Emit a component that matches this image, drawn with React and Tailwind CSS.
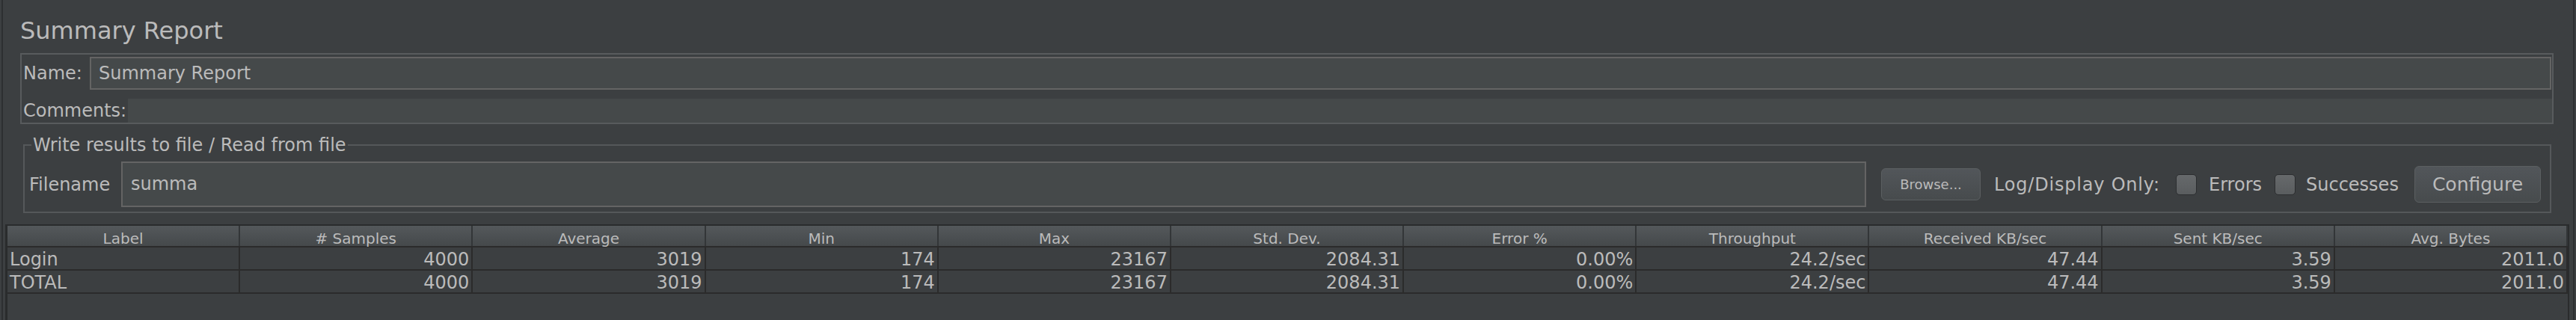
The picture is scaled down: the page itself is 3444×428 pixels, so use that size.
import React from 'react';

const headers = ['Label', '# Samples', 'Average', 'Min', 'Max', 'Std. Dev.', 'Error %', 'Throughput', 'Received KB/sec', 'Sent KB/sec', 'Avg. Bytes'];

const rows = [
  ['Login', '4000', '3019', '174', '23167', '2084.31', '0.00%', '24.2/sec', '47.44', '3.59', '2011.0'],
  ['TOTAL', '4000', '3019', '174', '23167', '2084.31', '0.00%', '24.2/sec', '47.44', '3.59', '2011.0'],
];

function Checkbox() {
  return <div className="w-[28px] h-[28px] shrink-0 rounded-[5px] border border-[#2c2e30] bg-gradient-to-b from-[#66696b] to-[#5a5d5f]" />;
}

export default function App() {
  return (
    <div className="w-[3444px] h-[428px] overflow-hidden bg-[#3c3f41] px-[2px] text-[#bbbbbb] font-['DejaVu_Sans',sans-serif]">
      <div className="h-full border-x-2 border-[#2d2f31] flex flex-col">
        {/* Title */}
        <div className="mt-[22px] h-[38px] leading-[38px] text-[32px] pl-[23px]">Summary Report</div>

        {/* Name / comments panel */}
        <div className="mt-[11px] ml-[23px] mr-[26px] border-2 border-[#585b5d] pt-[3px] pl-[2px] pr-[1px] text-[24px]">
          <div className="flex items-center h-[44px]">
            <div className="w-[89px] shrink-0">Name:</div>
            <div className="flex-1 h-[44px] border-2 border-[#646464] bg-[#45494a] pl-[10px] leading-[40px]">Summary Report</div>
          </div>
          <div className="mt-[12px] flex h-[32px]">
            <div className="w-[140px] shrink-0 leading-[32px]">Comments:</div>
            <div className="flex-1 bg-[#45494a] -mr-[1px]" />
          </div>
        </div>

        {/* Write results fieldset */}
        <fieldset className="mt-[14px] ml-[27px] mr-[29px] border-2 border-[#55585a] px-[6px] pt-[8px] pb-[6px] text-[24px]">
          <legend className="ml-[3px] px-[2px] leading-[28px]">Write results to file / Read from file</legend>
          <div className="flex items-center h-[61px]">
            <div className="w-[123px] shrink-0">Filename</div>
            <div className="flex-1 h-[61px] border-2 border-[#646464] bg-[#45494a] pl-[11px] leading-[57px]">summa</div>
            <div className="ml-[20px] w-[133px] h-[43px] shrink-0 rounded-[6px] border border-[#5b5f61] bg-gradient-to-b from-[#52565a] to-[#474b4d] flex items-center justify-center text-[18px]">
              Browse...
            </div>
            <div className="ml-[18px] w-[226px] shrink-0 whitespace-nowrap tracking-[0.8px]">Log/Display Only:</div>
            <div className="ml-[17px]"><Checkbox /></div>
            <div className="ml-[16px] w-[69px] shrink-0">Errors</div>
            <div className="ml-[19px]"><Checkbox /></div>
            <div className="ml-[14px] w-[125px] shrink-0 whitespace-nowrap">Successes</div>
            <div className="ml-[20px] mr-[6px] w-[169px] h-[49px] shrink-0 rounded-[6px] border border-[#5b5f61] bg-gradient-to-b from-[#52565a] to-[#474b4d] flex items-center justify-center text-[25px]">
              Configure
            </div>
          </div>
        </fieldset>

        {/* Results table */}
        <div className="mt-[15px] ml-[3px] mr-[5px] flex-1 border-l-[3px] border-t-2 border-r-2 border-[#2a2c2d]">
          <div className="grid grid-cols-11 h-[29px] border-b-2 border-[#2b2b2b] bg-gradient-to-b from-[#54585b] to-[#45494b] text-[20px]">
            {headers.map(h => (
              <div key={h} className="text-center leading-[20px] pt-[7px] border-r-2 border-[#333638] whitespace-nowrap">{h}</div>
            ))}
          </div>
          {rows.map((r, i) => (
            <div key={i} className="grid grid-cols-11 h-[31px] border-b-2 border-[#2b2b2b] text-[24px]">
              {r.map((v, j) => (
                <div
                  key={j}
                  className={`leading-[25px] pt-[4px] border-r-2 border-[#2b2b2b] whitespace-nowrap ${j === 0 ? 'text-left pl-[3px]' : 'text-right pr-[3px]'}`}
                >
                  {v}
                </div>
              ))}
            </div>
          ))}
        </div>
      </div>
    </div>
  );
}
